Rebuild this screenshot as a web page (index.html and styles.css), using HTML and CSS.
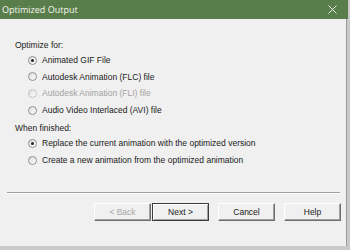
FILE: index.html
```html
<!DOCTYPE html>
<html lang="en">
<head>
    <meta charset="UTF-8">
    <title>Optimized Output</title>
    <link rel="stylesheet" href="styles.css">
</head>
<body>

<div class="window">
    <div class="titlebar">
        <span class="title">Optimized Output</span>
        <svg class="close" width="9" height="9" viewBox="0 0 9 9">
            <path d="M0.5 0.5 L8.5 8.5 M8.5 0.5 L0.5 8.5" stroke="#e8eee4" stroke-width="1" fill="none"/>
        </svg>
    </div>

    <div class="content">
        <div class="group-label">Optimize for:</div>
        <div class="option"><span class="radio checked"></span>Animated GIF File</div>
        <div class="option"><span class="radio"></span>Autodesk Animation (FLC) file</div>
        <div class="option disabled"><span class="radio"></span>Autodesk Animation (FLI) file</div>
        <div class="option"><span class="radio"></span>Audio Video Interlaced (AVI) file</div>

        <div class="group-label second">When finished:</div>
        <div class="option"><span class="radio checked"></span>Replace the current animation with the optimized version</div>
        <div class="option"><span class="radio"></span>Create a new animation from the optimized animation</div>
    </div>

    <div class="separator"></div>

    <div class="footer-buttons">
        <button class="btn" disabled>&lt; Back</button>
        <button class="btn default">Next &gt;</button>
        <button class="btn spaced">Cancel</button>
        <button class="btn spaced">Help</button>
    </div>
</div>

</body>
</html>
```

FILE: styles.css
```css
body {
    margin: 0;
    padding: 0;
    background-color: #c9c9c9;
    font-family: "Liberation Sans", Arial, sans-serif;
    font-size: 8.5px;
    color: #1a1a1a;
}

.window {
    width: 346px;
    height: 246px;
    background-color: #f0f0f0;
    border-right: 1px solid #9a9a9a;
    display: flex;
    flex-direction: column;
}

.titlebar {
    background-color: #5a7e4b;
    height: 19px;
    width: 348px;
    display: flex;
    align-items: center;
    justify-content: space-between;
}

.title {
    font-family: "Open Sans", "Noto Sans", sans-serif;
    font-size: 9px;
    color: #f4f7f2;
    padding-left: 2px;
}

.close {
    margin-right: 11px;
}

.content {
    padding: 20px 0 0 15px;
    height: 173px;
    box-sizing: border-box;
}

.group-label {
    height: 12px;
    line-height: 12px;
    margin-bottom: 1px;
}

.group-label.second {
    margin-top: 4px;
}

.option {
    height: 16.6px;
    line-height: 16.6px;
    display: flex;
    align-items: center;
    padding-left: 13px;
}

.option.disabled {
    color: #a3a3a3;
}

.radio {
    width: 7px;
    height: 7px;
    border: 1px solid #8f8f8f;
    border-radius: 50%;
    background: linear-gradient(135deg, #dcdcdc, #ffffff);
    margin-right: 5px;
    position: relative;
}

.option.disabled .radio {
    border-color: #c4c4c4;
}

.radio.checked::after {
    content: "";
    position: absolute;
    left: 2px;
    top: 2px;
    width: 3px;
    height: 3px;
    border-radius: 50%;
    background-color: #222;
}

.separator {
    margin: 0 6px 0 7px;
    border-top: 1px solid #a0a0a0;
    border-bottom: 1px solid #ffffff;
}

.footer-buttons {
    display: flex;
    justify-content: flex-end;
    padding: 9px 5px 0 0;
}

.btn {
    width: 57px;
    height: 18px;
    padding: 0;
    font-family: "Liberation Sans", Arial, sans-serif;
    font-size: 8.5px;
    color: #1a1a1a;
    background-color: #f0f0f0;
    border: 1px solid;
    border-color: #ffffff #6e6e6e #6e6e6e #ffffff;
    box-shadow: inset -1px -1px 0 #a0a0a0;
    margin-left: 1px;
}

.btn:disabled {
    color: #a8a8a8;
}

.btn.default {
    border: 1px solid #3c3c3c;
    box-shadow: inset 1px 1px 0 #ffffff, inset -1px -1px 0 #a0a0a0;
}

.btn.spaced {
    margin-left: 9px;
}
```
